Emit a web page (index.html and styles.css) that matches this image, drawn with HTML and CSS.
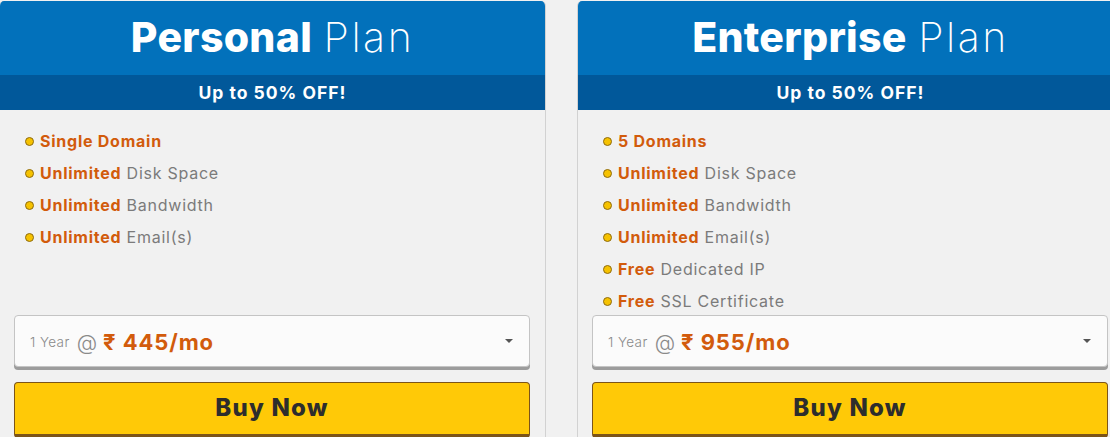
FILE: index.html
```html
<!DOCTYPE html>
<html>
<head>
<meta charset="utf-8">
<link rel="stylesheet" href="styles.css">
</head>
<body>
<div class="plans">
  <div class="card">
    <div class="card-head"><h2 class="title"><b>Personal</b> <span class="thin">Plan</span></h2></div>
    <div class="card-off">Up to 50% OFF!</div>
    <ul class="features">
      <li><b>Single Domain</b></li>
      <li><b>Unlimited</b> Disk Space</li>
      <li><b>Unlimited</b> Bandwidth</li>
      <li><b>Unlimited</b> Email(s)</li>
    </ul>
    <div class="select">
      <span class="yr">1 Year</span><span class="at">@</span><span class="price">₹ 445/mo</span>
      <span class="caret"></span>
    </div>
    <button class="buy">Buy Now</button>
  </div>
  <div class="card">
    <div class="card-head"><h2 class="title"><b>Enterprise</b> <span class="thin">Plan</span></h2></div>
    <div class="card-off">Up to 50% OFF!</div>
    <ul class="features">
      <li><b>5 Domains</b></li>
      <li><b>Unlimited</b> Disk Space</li>
      <li><b>Unlimited</b> Bandwidth</li>
      <li><b>Unlimited</b> Email(s)</li>
      <li><b>Free</b> Dedicated IP</li>
      <li><b>Free</b> SSL Certificate</li>
    </ul>
    <div class="select">
      <span class="yr">1 Year</span><span class="at">@</span><span class="price">₹ 955/mo</span>
      <span class="caret"></span>
    </div>
    <button class="buy">Buy Now</button>
  </div>
</div>
</body>
</html>
```
FILE: styles.css
```css
* { box-sizing: border-box; }
html, body { margin: 0; padding: 0; }
body {
  background: #f1f1f1;
  font-family: Inter, "Noto Sans", "DejaVu Sans", sans-serif;
  overflow: hidden;
}
.plans {
  display: flex;
  gap: 31px;
  padding-top: 1px;
  margin-left: -1px;
}
.card {
  flex: 0 0 547px;
  height: 460px;
  background: #f1f1f1;
  border-left: 1px solid #d2d2d2;
  border-right: 1px solid #d2d2d2;
  border-radius: 5px 5px 0 0;
  overflow: hidden;
}
.card-head {
  background: #0271bb;
  height: 74px;
  display: flex;
  align-items: center;
  justify-content: center;
}
.title {
  margin: 0;
  color: #fff;
  font-size: 41px;
  font-weight: 200;
  padding-bottom: 3px;
  white-space: pre;
}
.title b { font-weight: 800; letter-spacing: 0.3px; }
.title .thin { letter-spacing: 2.5px; }
.card-off {
  background: #01589a;
  height: 35px;
  color: #fff;
  font-weight: 700;
  font-size: 17.5px;
  letter-spacing: 1px;
  display: flex;
  align-items: center;
  justify-content: center;
}
.features {
  list-style: none;
  margin: 0;
  padding: 15px 0 0 25px;
  height: 205px;
}
.features li {
  height: 32px;
  display: flex;
  align-items: center;
  font-size: 16px;
  letter-spacing: 0.75px;
  color: #7b7b7b;
  font-weight: 400;
  white-space: pre;
}
.features li::before {
  content: "";
  width: 7px;
  height: 7px;
  border-radius: 50%;
  background: #f6c200;
  border: 1px solid #8e6b10;
  margin-right: 6px;
  flex: 0 0 auto;
}
.features li b {
  color: #d25b0c;
  font-weight: 700;
}
.select {
  margin: 0 15px 0 14px;
  height: 52px;
  background: #fbfbfb;
  border: 1px solid #c4c4c4;
  border-radius: 4px;
  box-shadow: 0 3px 0 #9c9c9c;
  display: flex;
  align-items: center;
  padding: 2px 16px 0 15px;
}
.yr { font-size: 13.5px; color: #8a8a8a; font-weight: 300; letter-spacing: 0.4px; }
.at { font-size: 21px; color: #8a8a8a; font-weight: 300; margin: 0 6px 0 7px; }
.price { font-size: 22px; color: #d25b0c; font-weight: 700; letter-spacing: 0.9px; }
.caret {
  margin-left: auto;
  width: 0; height: 0;
  border-left: 4px solid transparent;
  border-right: 4px solid transparent;
  border-top: 4px solid #555;
  margin-top: -3px;
}
.buy {
  display: block;
  margin: 15px 15px 0 14px;
  width: calc(100% - 29px);
  height: 56px;
  background: #ffc907;
  border: 1px solid #7c5418;
  border-bottom-width: 4px;
  border-radius: 4px;
  font-family: inherit;
  font-size: 24px;
  font-weight: 800;
  letter-spacing: 1.2px;
  color: #2d2d2d;
  padding: 0 0 2px;
}
```
